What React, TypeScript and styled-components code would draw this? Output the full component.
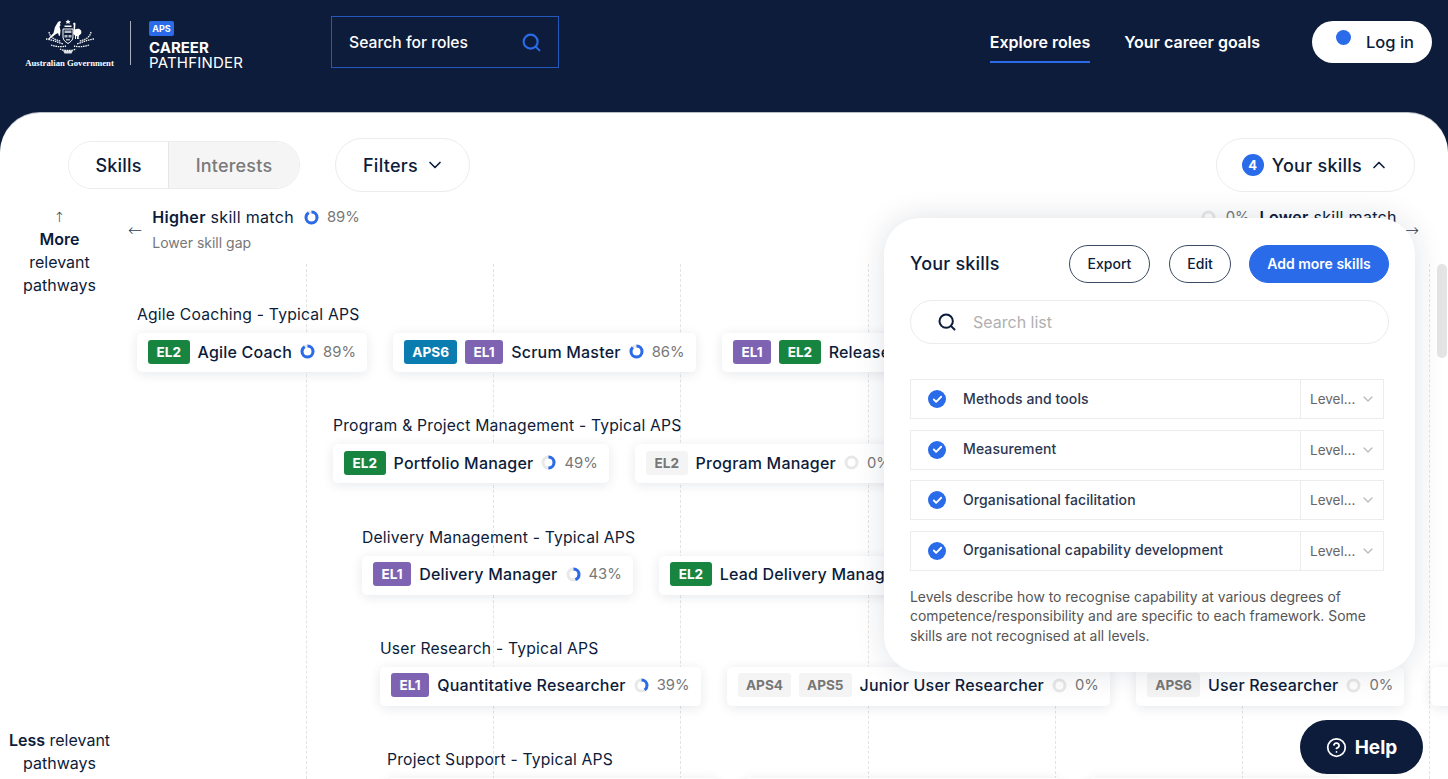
import styled, { createGlobalStyle } from 'styled-components';
import { Search, ChevronDown, ChevronUp, Check, CircleHelp } from 'lucide-react';

const navy = '#0c1c3a';
const blue = '#2a6bea';

const GlobalStyle = createGlobalStyle`
  * { box-sizing: border-box; }
  html, body { margin: 0; height: 100%; overflow: hidden; }
  body { background: ${navy}; color: ${navy}; font-family: Inter, "Noto Sans", Arial, sans-serif; }
`;

const Page = styled.div`
  display: flex;
  flex-direction: column;
  height: 779px;
  position: relative;
  overflow: hidden;
`;

const Header = styled.header`
  height: 113px;
  flex: none;
  display: flex;
  align-items: flex-start;
  padding: 16px 16px 0 25px;
  color: #fff;
`;

const GovLogo = styled.div`
  width: 89px;
  margin-top: 3px;
  display: flex;
  flex-direction: column;
  align-items: center;
  svg { width: 50px; height: 36px; }
`;

const GovName = styled.span`
  font-family: "Liberation Serif", serif;
  font-size: 8.7px;
  font-weight: 700;
  margin-top: 3px;
  white-space: nowrap;
`;

const LogoDivider = styled.div`
  width: 1px;
  height: 44px;
  background: #a9aeb8;
  margin: 5px 18px 0 16px;
`;

const Brand = styled.div`
  display: flex;
  flex-direction: column;
  margin-top: 5px;
  font-size: 15px;
  line-height: 15px;
`;

const ApsBadge = styled.span`
  width: 25px;
  height: 15px;
  margin-bottom: 4px;
  border-radius: 2px;
  background: ${blue};
  font-size: 9px;
  line-height: 15px;
  font-weight: 700;
  text-align: center;
`;

const BrandStrong = styled.span`
  font-weight: 700;
`;

const BrandLight = styled.span`
  font-weight: 400;
  letter-spacing: 0.2px;
`;

const RoleSearch = styled.div`
  width: 228px;
  height: 52px;
  margin-left: 88px;
  padding: 0 16px 0 17px;
  border: 1px solid #2459bb;
  display: flex;
  align-items: center;
  justify-content: space-between;
  font-size: 15.7px;
  font-weight: 500;
  svg { color: ${blue}; }
`;

const Nav = styled.nav`
  margin-left: auto;
  display: flex;
  align-items: flex-start;
`;

const NavLink = styled.a<{ $active?: boolean }>`
  height: 47px;
  margin-right: 34px;
  padding-top: 15px;
  font-size: 16px;
  line-height: 22px;
  font-weight: 600;
  white-space: nowrap;
  border-bottom: 2px solid ${(p) => (p.$active ? blue : 'transparent')};
`;

const LoginButton = styled.button`
  width: 120px;
  height: 42px;
  margin: 5px 0 0 18px;
  border: 0;
  border-radius: 21px;
  background: #fff;
  color: ${navy};
  display: flex;
  align-items: center;
  font: 500 16.5px Inter, sans-serif;
  padding: 0 0 0 24px;
`;

const LoginDot = styled.span`
  width: 15px;
  height: 15px;
  margin: -9px 15px 0 0;
  border-radius: 50%;
  background: ${blue};
`;

const Sheet = styled.main`
  flex: 1;
  min-height: 0;
  position: relative;
  display: flex;
  flex-direction: column;
  background: #fff;
  border-radius: 40px 40px 0 0;
  box-shadow: 0 -1px 0 #b8bec8;
  overflow: hidden;
`;

const Toolbar = styled.div`
  flex: none;
  height: 54px;
  margin-top: 25px;
  padding: 0 33px 0 68px;
  display: flex;
  align-items: center;
  gap: 35px;
`;

const Segments = styled.div`
  display: flex;
  height: 48px;
  border: 1px solid #ececec;
  border-radius: 24px;
  overflow: hidden;
`;

const Segment = styled.div<{ $on?: boolean }>`
  width: ${(p) => (p.$on ? '99px' : '131px')};
  display: flex;
  align-items: center;
  justify-content: center;
  font-size: 18px;
  font-weight: 500;
  letter-spacing: 0.2px;
  background: ${(p) => (p.$on ? '#fff' : '#f5f5f5')};
  color: ${(p) => (p.$on ? navy : '#7a7a7a')};
  border-left: ${(p) => (p.$on ? '0' : '1px solid #e6e6e6')};
`;

const PillButton = styled.button<{ $end?: boolean }>`
  height: 54px;
  padding: 0 ${(p) => (p.$end ? '25px 0 25px' : '24px 0 27px')};
  margin-left: ${(p) => (p.$end ? 'auto' : '0')};
  border: 1px solid #ececec;
  border-radius: 27px;
  background: #fff;
  color: ${navy};
  display: flex;
  align-items: center;
  gap: 7px;
  font: 500 18px Inter, sans-serif;
  letter-spacing: 0.25px;
`;

const CountBadge = styled.span`
  width: 22px;
  height: 22px;
  margin-right: 1px;
  border-radius: 50%;
  background: ${blue};
  color: #fff;
  font-size: 13px;
  line-height: 22px;
  font-weight: 700;
  text-align: center;
  letter-spacing: 0;
`;

const Body = styled.div`
  flex: 1;
  min-height: 0;
  margin-top: 13px;
  display: grid;
  grid-template-columns: 119px 1fr;
  grid-template-rows: minmax(0, 1fr);
`;

const RelevanceAxis = styled.aside`
  display: flex;
  flex-direction: column;
  justify-content: space-between;
  min-height: 0;
  padding-bottom: 4px;
  text-align: center;
  font-size: 16px;
  line-height: 23px;
`;

const AxisText = styled.div`
  strong { font-weight: 600; }
`;

const Arrow = styled.span`
  font-family: "DejaVu Sans", sans-serif;
  font-size: 14px;
  line-height: 22px;
  font-weight: 300;
  color: #2f3a52;
`;

const Stage = styled.div`
  display: flex;
  flex-direction: column;
  min-width: 0;
  min-height: 0;
`;

const MatchAxis = styled.div`
  flex: none;
  height: 59px;
  padding: 2px 29px 0 9px;
  display: flex;
  justify-content: space-between;
`;

const MatchEnd = styled.div`
  display: flex;
  align-items: flex-start;
  gap: 8px;
`;

const LeftEnd = styled(MatchEnd)`
  gap: 10px;
`;

const MatchEndArrow = styled(Arrow)`
  margin-top: 12px;
  font-size: 17px;
`;

const MatchLabel = styled.div<{ $gap: number }>`
  display: flex;
  align-items: center;
  gap: ${(p) => p.$gap}px;
  height: 20px;
  font-size: 16px;
  letter-spacing: 0.3px;
  strong { font-weight: 600; }
`;

const HigherText = styled.span`
  margin-right: 2px;
`;

const MatchNote = styled.div`
  margin-top: 7px;
  font-size: 14px;
  color: #777;
`;

const Percent = styled.span`
  font-size: 14.8px;
  letter-spacing: 0;
  color: #777;
`;

const Canvas = styled.div`
  flex: 1;
  min-height: 0;
  position: relative;
  padding-top: 40px;
  display: flex;
  flex-direction: column;
  gap: 43.3px;
  overflow: hidden;
`;

const GridLines = styled.div`
  position: absolute;
  inset: 0 0 0 187px;
  display: flex;
`;

const GridLine = styled.div`
  flex: none;
  width: 187.2px;
  border-left: 1px dashed #e3e3e3;
`;

const Pathway = styled.section<{ $indent: number }>`
  position: relative;
  flex: none;
  margin-left: ${(p) => p.$indent}px;
`;

const PathwayTitle = styled.h3`
  margin: 0 0 8px;
  font-size: 15.7px;
  line-height: 21px;
  font-weight: 400;
  letter-spacing: 0.2px;
  white-space: nowrap;
`;

const Cards = styled.div`
  display: flex;
  gap: 26.4px;
`;

const RoleCard = styled.div<{ $min?: number }>`
  flex: none;
  height: 39px;
  min-width: ${(p) => p.$min ?? 0}px;
  padding: 0 11px 2px;
  display: flex;
  align-items: center;
  gap: 8px;
  background: #fff;
  border-radius: 5px;
  box-shadow: 0 2px 12px rgba(12, 28, 58, 0.1);
`;

const tagColors: Record<string, string> = {
  EL2: '#17853f',
  EL1: '#7e63b3',
  APS6: '#0a7cb0',
};

const Tag = styled.span<{ $muted?: boolean; $level: string }>`
  height: 24px;
  padding: 0 ${(p) => (p.$level.length > 3 ? 8 : 8.5)}px;
  border-radius: 3px;
  font-size: 13.6px;
  line-height: 24px;
  font-weight: 700;
  background: ${(p) => (p.$muted ? '#f4f4f4' : tagColors[p.$level])};
  color: ${(p) => (p.$muted ? '#777' : '#fff')};
`;

const RoleName = styled.span`
  font-size: 16px;
  font-weight: 500;
  letter-spacing: 0.2px;
  white-space: nowrap;
`;

const SkillsPanel = styled.div`
  position: absolute;
  top: 105px;
  right: 33px;
  width: 531px;
  height: 454px;
  padding: 27px 26px 0;
  background: #fff;
  border-radius: 36px;
  box-shadow: 0 0 30px rgba(12, 28, 58, 0.13);
`;

const PanelHead = styled.div`
  display: flex;
  align-items: center;
  height: 38px;
`;

const PanelTitle = styled.h2`
  margin: 0 auto 1px 0;
  font-size: 18px;
  font-weight: 500;
  letter-spacing: 0.2px;
`;

const PanelButton = styled.button<{ $primary?: boolean; $w: number }>`
  width: ${(p) => p.$w}px;
  height: 38px;
  margin-left: ${(p) => (p.$primary ? 18 : 19)}px;
  padding-bottom: 2px;
  border-radius: 19px;
  border: 1px solid ${(p) => (p.$primary ? blue : '#3d4a66')};
  background: ${(p) => (p.$primary ? blue : '#fff')};
  color: ${(p) => (p.$primary ? '#fff' : navy)};
  font: ${(p) => (p.$primary ? 600 : 500)} 14px Inter, sans-serif;
`;

const ListSearch = styled.div`
  height: 44px;
  margin-top: 17px;
  padding-left: 26px;
  display: flex;
  align-items: center;
  gap: 16px;
  border: 1px solid #ececec;
  border-radius: 22px;
  font-size: 16px;
  color: #b0b0b0;
  svg { color: ${navy}; }
`;

const SkillList = styled.div`
  width: 474px;
  margin-top: 35px;
  display: flex;
  flex-direction: column;
  gap: 10.5px;
`;

const SkillRow = styled.div`
  height: 40px;
  display: flex;
  align-items: center;
  border: 1px solid #ececec;
`;

const CheckDot = styled.span`
  width: 18px;
  height: 18px;
  margin: 0 17px;
  border-radius: 50%;
  background: ${blue};
  color: #fff;
  display: flex;
  align-items: center;
  justify-content: center;
`;

const SkillName = styled.span`
  flex: 1;
  padding-bottom: 2px;
  font-size: 14px;
  font-weight: 500;
  letter-spacing: 0.1px;
  color: #2b3650;
`;

const LevelCell = styled.div`
  width: 83px;
  height: 100%;
  padding: 0 7px 0 9px;
  display: flex;
  align-items: center;
  justify-content: space-between;
  border-left: 1px solid #ececec;
  font-size: 13.5px;
  color: #666;
  svg { color: #bbb; }
`;

const PanelNote = styled.p`
  margin: 17px 0 0;
  font-size: 13.9px;
  line-height: 19.6px;
  color: #555;
  white-space: nowrap;
`;

const ScrollThumb = styled.div`
  position: absolute;
  top: 151px;
  right: 1px;
  width: 10px;
  height: 94px;
  border-radius: 5px;
  background: #e4e4e4;
`;

const HelpButton = styled.button`
  position: fixed;
  right: 25px;
  bottom: 5px;
  width: 123px;
  height: 54px;
  border: 0;
  border-radius: 27px;
  background: ${navy};
  color: #fff;
  display: flex;
  align-items: center;
  justify-content: center;
  gap: 8px;
  font: 700 19px Inter, sans-serif;
`;

function Ring({ pct }: { pct: number }) {
  const r = 5.5;
  const c = 2 * Math.PI * r;
  return (
    <svg width="15" height="15" viewBox="0 0 15 15" style={{ flex: 'none' }}>
      <circle cx="7.5" cy="7.5" r={r} fill="none" stroke="#e8e8e8" strokeWidth="3" />
      <circle
        cx="7.5"
        cy="7.5"
        r={r}
        fill="none"
        stroke={blue}
        strokeWidth="3"
        strokeDasharray={`${(pct / 100) * c} ${c}`}
        transform="rotate(-90 7.5 7.5)"
      />
    </svg>
  );
}

function Crest() {
  return (
    <svg viewBox="0 0 50 36" fill="#fff">
      {/* star and helm */}
      <path d="M23 .5l.9 1.500 1.600.2-1.100 1.100.3 1.600-1.700-.8-1.700.8.3-1.600-1.100-1.100 1.600-.2z" />
      <path d="M19.500 6.500h7v1.500h-7z" />
      {/* kangaroo */}
      <path d="M13 3l2-1 1 1-1 1.500.5 2-1 1 1 4-.5 5-1 .5-1-3-2 1-7 5.500-1-.5 5.500-6 1.500-6z" />
      {/* emu */}
      <path d="M28 4.500l1.500-1 1 1-.5 6c2-1 5-1 6 1s0 4-2 5l-.5 3 1.500.5h-3l.2-3h-1l-.2 3h-1v-3.500c-2-1-2-3-1.500-5l.2-5.500z" />
      {/* shield */}
      <path d="M18 10h10v8c0 3-2.500 5-5 6.500-2.500-1.500-5-3.500-5-6.500z" fill="none" stroke="#fff" strokeWidth="1" />
      <path d="M19.500 11.500h7v2.500h-7zM19.500 16h3v2.500h-3zM23.500 16h3v2.500h-3zM21 20h4v1.500h-4z" opacity=".7" />
      {/* wattle sprigs */}
      <g stroke="#fff" strokeWidth="1.300" strokeDasharray="1.500 .8" fill="none">
        <path d="M1 20c6 .5 11 3 17 5M49 20c-6 .5-11 3-17 5" />
        <path d="M4 13c1 5 5 8 12 9M46 13c-1 5-5 8-12 9" />
        <path d="M6 26c5 2 11 2 15 1M44 26c-5 2-11 2-15 1" />
        <path d="M15 30c4 2 12 2 16 0" />
      </g>
      <path d="M18 31.500h10l-1.500 3h-7z" opacity=".85" />
    </svg>
  );
}

type Role = { levels: { name: string; muted?: boolean }[]; name: string; pct?: number; min?: number };

const pathways: { title: string; indent: number; roles: Role[] }[] = [
  {
    title: 'Agile Coaching - Typical APS',
    indent: 18,
    roles: [
      { levels: [{ name: 'EL2' }], name: 'Agile Coach', pct: 89 },
      { levels: [{ name: 'APS6' }, { name: 'EL1' }], name: 'Scrum Master', pct: 86 },
      { levels: [{ name: 'EL1' }, { name: 'EL2' }], name: 'Release', min: 300 },
    ],
  },
  {
    title: 'Program & Project Management - Typical APS',
    indent: 214,
    roles: [
      { levels: [{ name: 'EL2' }], name: 'Portfolio Manager', pct: 49 },
      { levels: [{ name: 'EL2', muted: true }], name: 'Program Manager', pct: 0 },
    ],
  },
  {
    title: 'Delivery Management - Typical APS',
    indent: 243,
    roles: [
      { levels: [{ name: 'EL1' }], name: 'Delivery Manager', pct: 43 },
      { levels: [{ name: 'EL2' }], name: 'Lead Delivery Manager', pct: 0 },
    ],
  },
  {
    title: 'User Research - Typical APS',
    indent: 261,
    roles: [
      { levels: [{ name: 'EL1' }], name: 'Quantitative Researcher', pct: 39 },
      { levels: [{ name: 'APS4', muted: true }, { name: 'APS5', muted: true }], name: 'Junior User Researcher', pct: 0 },
      { levels: [{ name: 'APS6', muted: true }], name: 'User Researcher', pct: 0 },
      { levels: [], name: '', min: 60 },
    ],
  },
  {
    title: 'Project Support - Typical APS',
    indent: 268,
    roles: [
      { levels: [], name: '', min: 331 },
      { levels: [], name: '', min: 317 },
      { levels: [], name: '', min: 259 },
    ],
  },
];

const skills = [
  'Methods and tools',
  'Measurement',
  'Organisational facilitation',
  'Organisational capability development',
];

export default function App() {
  return (
    <>
      <GlobalStyle />
      <Page>
        <Header>
          <GovLogo>
            <Crest />
            <GovName>Australian Government</GovName>
          </GovLogo>
          <LogoDivider />
          <Brand>
            <ApsBadge>APS</ApsBadge>
            <BrandStrong>CAREER</BrandStrong>
            <BrandLight>PATHFINDER</BrandLight>
          </Brand>
          <RoleSearch>
            Search for roles
            <Search size={21} strokeWidth={2.4} />
          </RoleSearch>
          <Nav>
            <NavLink $active>Explore roles</NavLink>
            <NavLink>Your career goals</NavLink>
            <LoginButton>
              <LoginDot />
              Log in
            </LoginButton>
          </Nav>
        </Header>

        <Sheet>
          <Toolbar>
            <Segments>
              <Segment $on>Skills</Segment>
              <Segment>Interests</Segment>
            </Segments>
            <PillButton>
              Filters <ChevronDown size={20} />
            </PillButton>
            <PillButton $end>
              <CountBadge>4</CountBadge>
              Your skills
              <ChevronUp size={20} />
            </PillButton>
          </Toolbar>

          <Body>
            <RelevanceAxis>
              <AxisText>
                <Arrow>↑</Arrow>
                <br />
                <strong>More</strong>
                <br />
                relevant
                <br />
                pathways
              </AxisText>
              <AxisText>
                <strong>Less</strong> relevant
                <br />
                pathways
              </AxisText>
            </RelevanceAxis>

            <Stage>
              <MatchAxis>
                <LeftEnd>
                  <MatchEndArrow>←</MatchEndArrow>
                  <div>
                    <MatchLabel $gap={8}>
                      <HigherText>
                        <strong>Higher</strong> skill match
                      </HigherText>
                      <Ring pct={89} />
                      <Percent>89%</Percent>
                    </MatchLabel>
                    <MatchNote>Lower skill gap</MatchNote>
                  </div>
                </LeftEnd>
                <MatchEnd>
                  <MatchLabel $gap={10}>
                    <Ring pct={0} />
                    <Percent>0%</Percent>
                    <span>
                      <strong>Lower</strong> skill match
                    </span>
                  </MatchLabel>
                  <MatchEndArrow>→</MatchEndArrow>
                </MatchEnd>
              </MatchAxis>

              <Canvas>
                <GridLines>
                  {[0, 1, 2, 3, 4, 5, 6].map((i) => (
                    <GridLine key={i} />
                  ))}
                </GridLines>
                {pathways.map((p) => (
                  <Pathway key={p.title} $indent={p.indent}>
                    <PathwayTitle>{p.title}</PathwayTitle>
                    <Cards>
                      {p.roles.map((r, i) => (
                        <RoleCard key={i} $min={r.min}>
                          {r.levels.map((l) => (
                            <Tag key={l.name} $level={l.name} $muted={l.muted}>
                              {l.name}
                            </Tag>
                          ))}
                          {r.name && <RoleName>{r.name}</RoleName>}
                          {r.pct !== undefined && <Ring pct={r.pct} />}
                          {r.pct !== undefined && <Percent>{r.pct}%</Percent>}
                        </RoleCard>
                      ))}
                    </Cards>
                  </Pathway>
                ))}
              </Canvas>
            </Stage>
          </Body>

          <ScrollThumb />

          <SkillsPanel>
            <PanelHead>
              <PanelTitle>Your skills</PanelTitle>
              <PanelButton $w={81}>Export</PanelButton>
              <PanelButton $w={62}>Edit</PanelButton>
              <PanelButton $primary $w={140}>
                Add more skills
              </PanelButton>
            </PanelHead>
            <ListSearch>
              <Search size={20} strokeWidth={2.4} />
              Search list
            </ListSearch>
            <SkillList>
              {skills.map((s) => (
                <SkillRow key={s}>
                  <CheckDot>
                    <Check size={11} strokeWidth={4} />
                  </CheckDot>
                  <SkillName>{s}</SkillName>
                  <LevelCell>
                    Level...
                    <ChevronDown size={16} />
                  </LevelCell>
                </SkillRow>
              ))}
            </SkillList>
            <PanelNote>
              Levels describe how to recognise capability at various degrees of
              <br />
              competence/responsibility and are specific to each framework. Some
              <br />
              skills are not recognised at all levels.
            </PanelNote>
          </SkillsPanel>
        </Sheet>

        <HelpButton>
          <CircleHelp size={21} />
          Help
        </HelpButton>
      </Page>
    </>
  );
}
